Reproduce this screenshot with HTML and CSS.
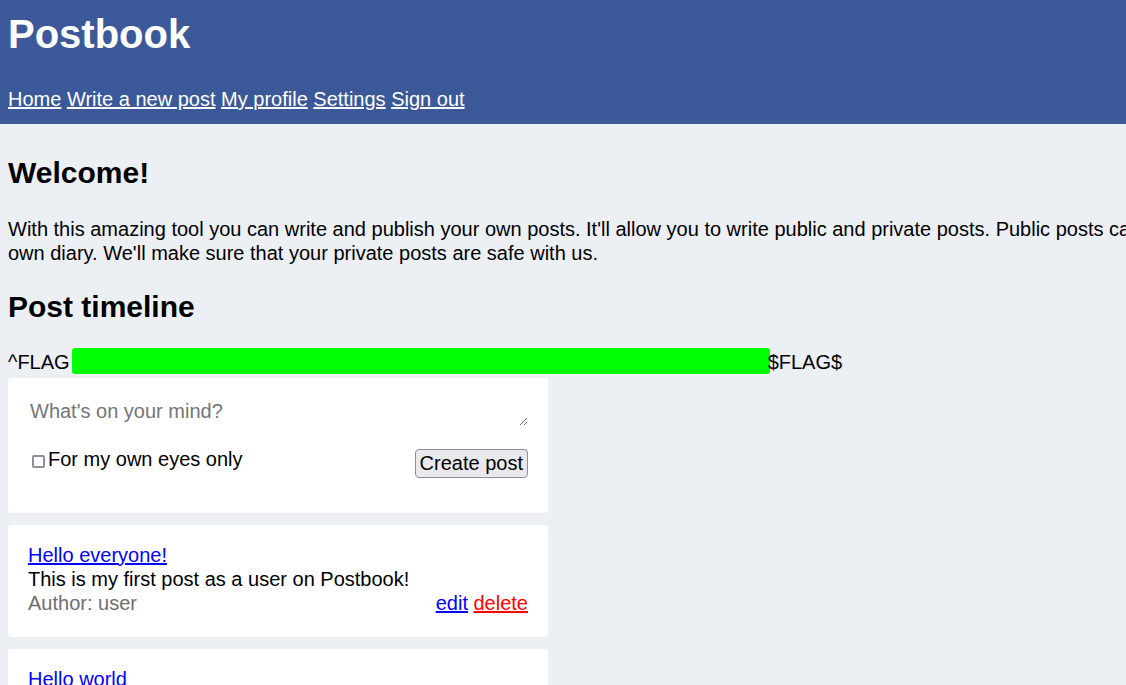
FILE: index.html
```html
<!DOCTYPE html>
<html lang="en">
<head>
<meta charset="utf-8">
<title>Postbook</title>
<link rel="stylesheet" href="styles.css">
</head>
<body>
<header class="topbar">
  <h1 class="brand">Postbook</h1>
  <nav class="nav">
    <a href="#">Home</a> <a href="#">Write a new post</a> <a href="#">My profile</a> <a href="#">Settings</a> <a href="#">Sign out</a>
  </nav>
</header>
<main class="main">
  <h2 class="heading heading-welcome">Welcome!</h2>
  <p class="intro">With this amazing tool you can write and publish your own posts. It'll allow you to write public and private posts. Public posts can be read by anyone that signs up. Private posts can be used to function as your own diary. We'll make sure that your private posts are safe with us.</p>
  <h2 class="heading heading-timeline">Post timeline</h2>
  <div class="flag">^FLAG<span class="redact"></span>$FLAG$</div>

  <section class="card composer">
    <textarea class="composer-input" rows="1" placeholder="What's on your mind?"></textarea>
    <div class="composer-row">
      <label class="private"><input type="checkbox" class="private-box">For my own eyes only</label>
      <button class="create-btn" type="button">Create post</button>
    </div>
  </section>

  <article class="card post">
    <a href="#" class="post-title">Hello everyone!</a>
    <div class="post-body">This is my first post as a user on Postbook!</div>
    <div class="post-meta">
      <span class="author">Author: user</span>
      <span class="actions"><a href="#" class="edit">edit</a> <a href="#" class="delete">delete</a></span>
    </div>
  </article>

  <article class="card post">
    <a href="#" class="post-title">Hello world</a>
    <div class="post-body">Welcome to Postbook.</div>
    <div class="post-meta">
      <span class="author">Author: admin</span>
    </div>
  </article>
</main>
</body>
</html>
```

FILE: styles.css
```css
html, body {
  margin: 0;
  padding: 0;
}
body {
  background: #eceff4;
  font-family: "Liberation Sans", Arial, sans-serif;
  font-size: 20px;
  line-height: 24px;
  color: #000;
}
.topbar {
  background: #3b5998;
  padding: 10px 8px 13px;
}
.brand {
  margin: 0;
  font-size: 40px;
  line-height: 48px;
  font-weight: bold;
  color: #fff;
}
.nav {
  margin-top: 29px;
}
.nav a {
  color: #fff;
  text-decoration: underline;
}
.main {
  padding: 0 8px;
}
.heading {
  margin: 0;
  font-size: 30px;
  line-height: 36px;
  font-weight: bold;
}
.heading-welcome {
  margin-top: 31px;
}
.intro {
  margin: 26px 0 0;
  width: 1850px;
}
.heading-timeline {
  margin-top: 24px;
}
.flag {
  margin-top: 25px;
  white-space: nowrap;
}
.redact {
  display: inline-block;
  width: 698px;
  height: 26px;
  margin: -2px -2px 0 2px;
  vertical-align: -5px;
  background: #00ff00;
  border-radius: 3px;
}
.card {
  width: 540px;
  box-sizing: border-box;
  background: #fff;
  border-radius: 4px;
  padding: 20px;
  margin-top: 12px;
}
.composer {
  margin-top: 4px;
}
.post {
  padding: 18px 20px 22px;
}
.composer-input {
  display: block;
  width: 100%;
  height: 28px;
  box-sizing: border-box;
  border: none;
  outline: none;
  padding: 1px 2px 3px;
  margin: 0;
  font-family: "Liberation Sans", Arial, sans-serif;
  font-size: 20px;
  line-height: 24px;
  background: #fff;
  color: #000;
}
.composer-input::placeholder {
  color: #757575;
}
.composer-row {
  display: flex;
  justify-content: space-between;
  align-items: flex-start;
  margin: 21px 0 15px;
}
.private {
  display: flex;
  align-items: flex-start;
}
.private-box {
  appearance: none;
  -webkit-appearance: none;
  box-sizing: border-box;
  width: 13px;
  height: 13px;
  margin: 8px 3px 0 4px;
  border: 2px solid #8f8f9d;
  border-radius: 2px;
  background: #fff;
}
.create-btn {
  margin-top: 2px;
  font-family: "Liberation Sans", Arial, sans-serif;
  font-size: 20px;
  line-height: 23px;
  padding: 2px 4px;
  background: #e9e9ed;
  border: 1px solid #8f8f9d;
  border-radius: 4px;
  color: #000;
}
.post-title {
  color: #0000ff;
  text-decoration: underline;
}
.post-meta {
  display: flex;
  justify-content: space-between;
}
.author {
  color: #6e6e6e;
}
.edit {
  color: #0000ff;
}
.delete {
  color: #ff0000;
}
```
